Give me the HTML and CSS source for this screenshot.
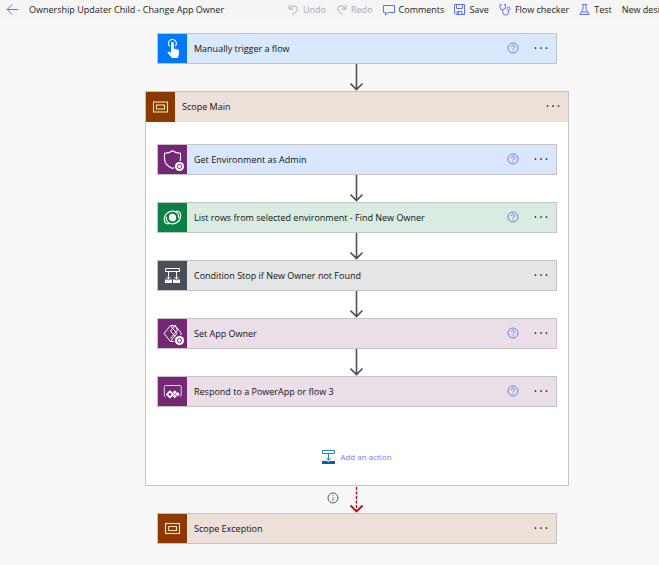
FILE: index.html
```html
<!DOCTYPE html>
<html lang="en">
<head>
  <meta charset="UTF-8">
  <meta name="viewport" content="width=device-width, initial-scale=1.0">
  <title>Ownership Updater Child - Change App Owner</title>
  <link rel="stylesheet" href="styles.css">
</head>
<body>

  <!-- Shared icons -->
  <svg class="sprite" aria-hidden="true">
    <symbol id="help" viewBox="0 0 12 12">
      <circle cx="6" cy="6" r="5" fill="none" stroke="currentColor" stroke-width="0.8"/>
      <path d="M4.400 4.800a1.600 1.500 0 1 1 2.500 1.200C6.300 6.400 6 6.600 6 7.300" fill="none" stroke="currentColor" stroke-width="0.8"/>
      <circle cx="6" cy="8.700" r="0.500" fill="currentColor"/>
    </symbol>
    <symbol id="dots" viewBox="0 0 16 4">
      <circle cx="2.500" cy="2" r="0.850"/>
      <circle cx="8" cy="2" r="0.850"/>
      <circle cx="13.500" cy="2" r="0.850"/>
    </symbol>
    <symbol id="arrow" viewBox="0 0 14 27">
      <path d="M6.500 0V25M.5 19.500L6.500 25.500L12.500 19.500" fill="none" stroke="#505050" stroke-width="1.600"/>
    </symbol>
    <symbol id="scope" viewBox="0 0 29 29">
      <rect x="7.500" y="9.500" width="14" height="10" fill="none" stroke="#f8dfb8" stroke-width="1.100"/>
      <rect x="10.500" y="12.500" width="8" height="4" fill="none" stroke="#f8dfb8" stroke-width="1.100"/>
    </symbol>
    <symbol id="gear" viewBox="0 0 10 10">
      <circle cx="5" cy="5" r="4.600" fill="#fff"/>
      <circle cx="5" cy="5" r="2.100" fill="none" stroke="#742774" stroke-width="1"/>
    </symbol>
  </svg>

  <header class="toolbar">
    <div class="heading">
      <button type="button" class="back" aria-label="Back">
        <svg width="13" height="12" viewBox="0 0 13 12"><path d="M12 5.500H1.200M6.200 .5L1.200 5.500l5 5" fill="none" stroke="currentColor"/></svg>
      </button>
      <h1>Ownership Updater Child - Change App Owner</h1>
    </div>
    <nav class="commands">
      <button type="button" disabled>
        <svg width="11" height="12" viewBox="0 0 11 12"><path d="M1.200 1v4.200h4.200M1.400 5C3 2.500 5 1.500 7 2c2.600.7 3 3.600 1.300 5.400L4.500 11" fill="none" stroke="currentColor"/></svg>
        Undo
      </button>
      <button type="button" disabled>
        <svg width="11" height="12" viewBox="0 0 11 12"><path d="M9.800 1v4.200H5.600M9.600 5C8 2.500 6 1.500 4 2 1.400 2.700 1 5.600 2.700 7.400L6.500 11" fill="none" stroke="currentColor"/></svg>
        Redo
      </button>
      <button type="button">
        <svg width="12" height="12" viewBox="0 0 12 12"><path d="M.5 1.500h11v7H5.200L2.500 11V8.500h-2z" fill="none" stroke="currentColor"/></svg>
        Comments
      </button>
      <button type="button">
        <svg width="11" height="12" viewBox="0 0 11 12"><path d="M.5 .5h10v10H2L.5 9zM2.500 .5v4h6v-4M3 10.500v-3h5v3M4.500 8v2.500" fill="none" stroke="currentColor"/></svg>
        Save
      </button>
      <button type="button">
        <svg width="12" height="12" viewBox="0 0 12 12"><path d="M2.500 .5H1V3a2.700 2.700 0 0 0 5.400 0V.5H5M3.700 5.700v2.500a2.900 2.900 0 0 0 5.800 0V6" fill="none" stroke="currentColor"/><circle cx="9.500" cy="4.500" r="1.500" fill="none" stroke="currentColor"/></svg>
        Flow checker
      </button>
      <button type="button">
        <svg width="11" height="12" viewBox="0 0 11 12"><path d="M3 .5h5M4 .5V5L.9 10.500h9.200L7 5V.5M2.500 8h6" fill="none" stroke="currentColor"/></svg>
        Test
      </button>
      <button type="button">New designer</button>
    </nav>
  </header>

  <main class="canvas">
    <section class="card blue">
      <svg class="icon" viewBox="0 0 29 29">
        <path d="M11.600 12.300a4 4 0 1 1 5.600 0" fill="none" stroke="#fff" stroke-width="1.100"/>
        <path d="M13 9.300a1.400 1.400 0 0 1 2.800 0v5.200l4 .9c1 .2 1.500.9 1.400 1.900l-.6 4.200-.8 2.500h-5.800l-4.700-5.500c.5-1.100 1.700-1.200 3.700.3z" fill="#fff"/>
      </svg>
      <h2>Manually trigger a flow</h2>
      <button type="button" class="help" aria-label="Help"><svg width="12" height="12"><use href="#help"/></svg></button>
      <button type="button" class="more" aria-label="More commands"><svg width="16" height="4"><use href="#dots"/></svg></button>
    </section>

    <svg class="arrow"><use href="#arrow"/></svg>

    <section class="scope">
      <div class="scope-header">
        <svg class="icon" viewBox="0 0 29 29"><use href="#scope"/></svg>
        <h2>Scope Main</h2>
        <button type="button" class="more" aria-label="More commands"><svg width="16" height="4"><use href="#dots"/></svg></button>
      </div>

      <div class="scope-body">
        <section class="card admin">
          <svg class="icon" viewBox="0 0 29 29">
            <path d="M14.500 5.800c2.500 1.900 5 2.400 8 2.400v5.500c0 4.500-3 7.600-8 9.800-5-2.200-8-5.300-8-9.800V8.200c3 0 5.500-.5 8-2.400z" fill="none" stroke="#fff" stroke-width="1.100"/>
            <circle cx="21.500" cy="21.500" r="5.600" fill="#742774"/>
            <use href="#gear" x="16.500" y="16.500" width="10" height="10"/>
          </svg>
          <h2>Get Environment as Admin</h2>
          <button type="button" class="help" aria-label="Help"><svg width="12" height="12"><use href="#help"/></svg></button>
          <button type="button" class="more" aria-label="More commands"><svg width="16" height="4"><use href="#dots"/></svg></button>
        </section>

        <svg class="arrow"><use href="#arrow"/></svg>

        <section class="card green">
          <svg class="icon" viewBox="0 0 29 29">
            <g fill="none" stroke="#fff" stroke-width="1.200">
              <path d="M11.500 20c-1.500 1.300-3.500 1-4.500-.8-1.600-3-.3-7 2.500-9.300 2.600-2 6-2.200 8.500-.8 2.200 1.300 3 3.700 2.400 5.900"/>
              <path d="M17.500 9c1.500-1.300 3.500-1 4.500.8 1.600 3 .3 7-2.500 9.300-2.600 2-6 2.200-8.500.8-2.200-1.300-3-3.700-2.400-5.900"/>
            </g>
            <path d="M12 11.300c2-1 4.500-.6 5.600 1.200.9 1.600.7 3.700-.6 5.200-2 1-4.500.6-5.600-1.200-.9-1.600-.7-3.700.6-5.200z" fill="#fff"/>
          </svg>
          <h2>List rows from selected environment - Find New Owner</h2>
          <button type="button" class="help" aria-label="Help"><svg width="12" height="12"><use href="#help"/></svg></button>
          <button type="button" class="more" aria-label="More commands"><svg width="16" height="4"><use href="#dots"/></svg></button>
        </section>

        <svg class="arrow"><use href="#arrow"/></svg>

        <section class="card gray">
          <svg class="icon" viewBox="0 0 29 29">
            <path d="M7.500 7.500h14v3h-14zM10.500 10.500v8M18.500 10.500v8M8.500 16l2 2 2-2M16.500 16l2 2 2-2" fill="none" stroke="#fff"/>
            <path d="M7 18.500h2l1.500 1 1.500-1h2V22H7zM15 18.500h2l1.500 1 1.500-1h2V22h-7z" fill="#fff"/>
          </svg>
          <h2>Condition Stop if New Owner not Found</h2>
          <button type="button" class="more" aria-label="More commands"><svg width="16" height="4"><use href="#dots"/></svg></button>
        </section>

        <svg class="arrow"><use href="#arrow"/></svg>

        <section class="card purple">
          <svg class="icon" viewBox="0 0 29 29">
            <g fill="none" stroke="#fff" stroke-width="1" stroke-linejoin="round">
              <path d="M12.500 6.500L6 14.500l6.500 8L19 14.500z"/>
              <path d="M12.500 6.500h4.500l6.500 8-3 4M12.500 22.500h4.500"/>
              <path d="M17 6.500l-4.500 5.500 4.500 5.500M17 6.500l2.500 4.500-7 8.500"/>
            </g>
            <circle cx="21.500" cy="21.500" r="5.600" fill="#742774"/>
            <use href="#gear" x="16.500" y="16.500" width="10" height="10"/>
          </svg>
          <h2>Set App Owner</h2>
          <button type="button" class="help" aria-label="Help"><svg width="12" height="12"><use href="#help"/></svg></button>
          <button type="button" class="more" aria-label="More commands"><svg width="16" height="4"><use href="#dots"/></svg></button>
        </section>

        <svg class="arrow"><use href="#arrow"/></svg>

        <section class="card purple">
          <svg class="icon" viewBox="0 0 29 29">
            <path d="M7.500 19.500a1.200 1.200 0 0 1-1.200-1.200V9.700a1.200 1.200 0 0 1 1.200-1.200h14.500a1.200 1.200 0 0 1 1.200 1.200v8.600a1.200 1.200 0 0 1-1.200 1.200" fill="none" stroke="#e6cfe6"/>
            <path d="M12 14.300l3 3-3 3-3-3z" fill="none" stroke="#fff" stroke-width="1.900" stroke-linejoin="round"/>
            <path d="M16.800 13.300l1.900 2-1.900 2-1.900-2zM16.800 17.300l1.900 2-1.900 2-1.900-2zM19.600 15l2.200 2.300-2.200 2.300-2.200-2.300z" fill="#fff"/>
          </svg>
          <h2>Respond to a PowerApp or flow 3</h2>
          <button type="button" class="help" aria-label="Help"><svg width="12" height="12"><use href="#help"/></svg></button>
          <button type="button" class="more" aria-label="More commands"><svg width="16" height="4"><use href="#dots"/></svg></button>
        </section>

        <button type="button" class="add-action">
          <svg width="14" height="14" viewBox="0 0 14 14"><path d="M.5 .5h12v3H.5zM6.500 3.500v7M4.500 8l2 2.500L8.500 8" fill="none" stroke="#2a7fc0"/><path d="M0 11h5l1.500 1L8 11h5v3H0z" fill="#0a5ca8"/></svg>
          Add an action
        </button>
      </div>
    </section>

    <div class="run-after">
      <svg class="info" width="12" height="12" viewBox="0 0 12 12"><circle cx="6" cy="6" r="5" fill="none" stroke="#555"/><path d="M6 5.200V9M6 3v1.200" stroke="#777"/></svg>
      <svg class="arrow" viewBox="0 0 14 27">
        <path d="M6.500 1V24" stroke="#b00e0e" stroke-width="1.400" stroke-dasharray="3 1.500"/>
        <path d="M.5 19.500L6.500 25.500L12.500 19.500" fill="none" stroke="#b00e0e" stroke-width="1.800"/>
      </svg>
    </div>

    <section class="card brown">
      <svg class="icon" viewBox="0 0 29 29"><use href="#scope"/></svg>
      <h2>Scope Exception</h2>
      <button type="button" class="more" aria-label="More commands"><svg width="16" height="4"><use href="#dots"/></svg></button>
    </section>
  </main>

</body>
</html>
```
FILE: styles.css
```css
body {
  margin: 0;
  background-color: #f8f8f8;
  color: #222;
  font-family: "Open Sans", "Noto Sans", sans-serif;
  font-size: 9px;
  line-height: 12px;
  overflow-x: hidden;
}

h1,
h2 {
  margin: 0;
  font-size: 9px;
  font-weight: 400;
}

button {
  display: flex;
  align-items: center;
  padding: 0;
  border: none;
  background: none;
  color: inherit;
  font: inherit;
  white-space: nowrap;
  cursor: pointer;
}

svg {
  display: block;
  flex-shrink: 0;
}

.sprite {
  position: absolute;
  width: 0;
  height: 0;
}

/* Toolbar */
.toolbar {
  display: flex;
  height: 20px;
  padding-left: 6px;
  background-color: #f5f5f5;
  overflow: hidden;
}

.heading {
  display: flex;
  flex: 0 0 282px;
  align-items: center;
  gap: 10px;
}

.back,
.commands svg {
  color: #5b72e8;
}

.commands {
  display: flex;
  gap: 10px;
}

.commands button {
  gap: 4px;
}

.commands button:disabled,
.commands button:disabled svg {
  color: #a8a8a8;
}

/* Flow */
.canvas {
  display: flex;
  flex-direction: column;
  align-items: center;
  padding: 13px 0 20px 55px;
}

.card {
  display: flex;
  align-items: center;
  box-sizing: border-box;
  width: 400px;
  height: 31px;
  padding-right: 7px;
  border: 1px solid #c4c4c4;
}

.card h2,
.scope-header h2 {
  flex: 1;
  margin-left: 7px;
  color: #111;
}

.icon {
  width: 29px;
  height: 29px;
}

.help,
.more {
  margin-bottom: 2px;
}

.help {
  margin-right: 14px;
  color: #4a68d8;
}

.arrow {
  width: 14px;
  height: 27px;
}

.scope {
  box-sizing: border-box;
  width: 424px;
  border: 1px solid #c4c4c4;
  background-color: #fff;
}

.scope-header {
  display: flex;
  align-items: center;
  height: 30px;
  padding-right: 7px;
  background-color: #ede0d9;
}

.scope-body {
  display: flex;
  flex-direction: column;
  align-items: center;
  padding: 22px 11px 21px;
}

.blue {
  background-color: #d9e9fd;
}

.blue .icon {
  background-color: #0077ff;
}

.admin {
  background-color: #d9e6fd;
}

.admin .icon,
.purple .icon {
  background-color: #742774;
}

.green {
  background-color: #daebe2;
}

.green .icon {
  background-color: #088142;
}

.gray {
  background-color: #e4e5e6;
}

.gray .icon {
  background-color: #484f58;
}

.purple {
  background-color: #eadfe9;
}

.brown {
  background-color: #ede0d9;
}

.brown .icon,
.scope-header .icon {
  background-color: #8c3900;
}

.scope-header .icon {
  height: 30px;
}

.add-action {
  gap: 4px;
  margin-top: 43px;
  color: #6e7ff0;
  font-size: 8px;
}

.run-after {
  display: grid;
  grid-template-columns: 1fr 14px 1fr;
  align-items: center;
  width: 400px;
}

.info {
  justify-self: end;
  margin: 0 11px 4px 0;
}
```
